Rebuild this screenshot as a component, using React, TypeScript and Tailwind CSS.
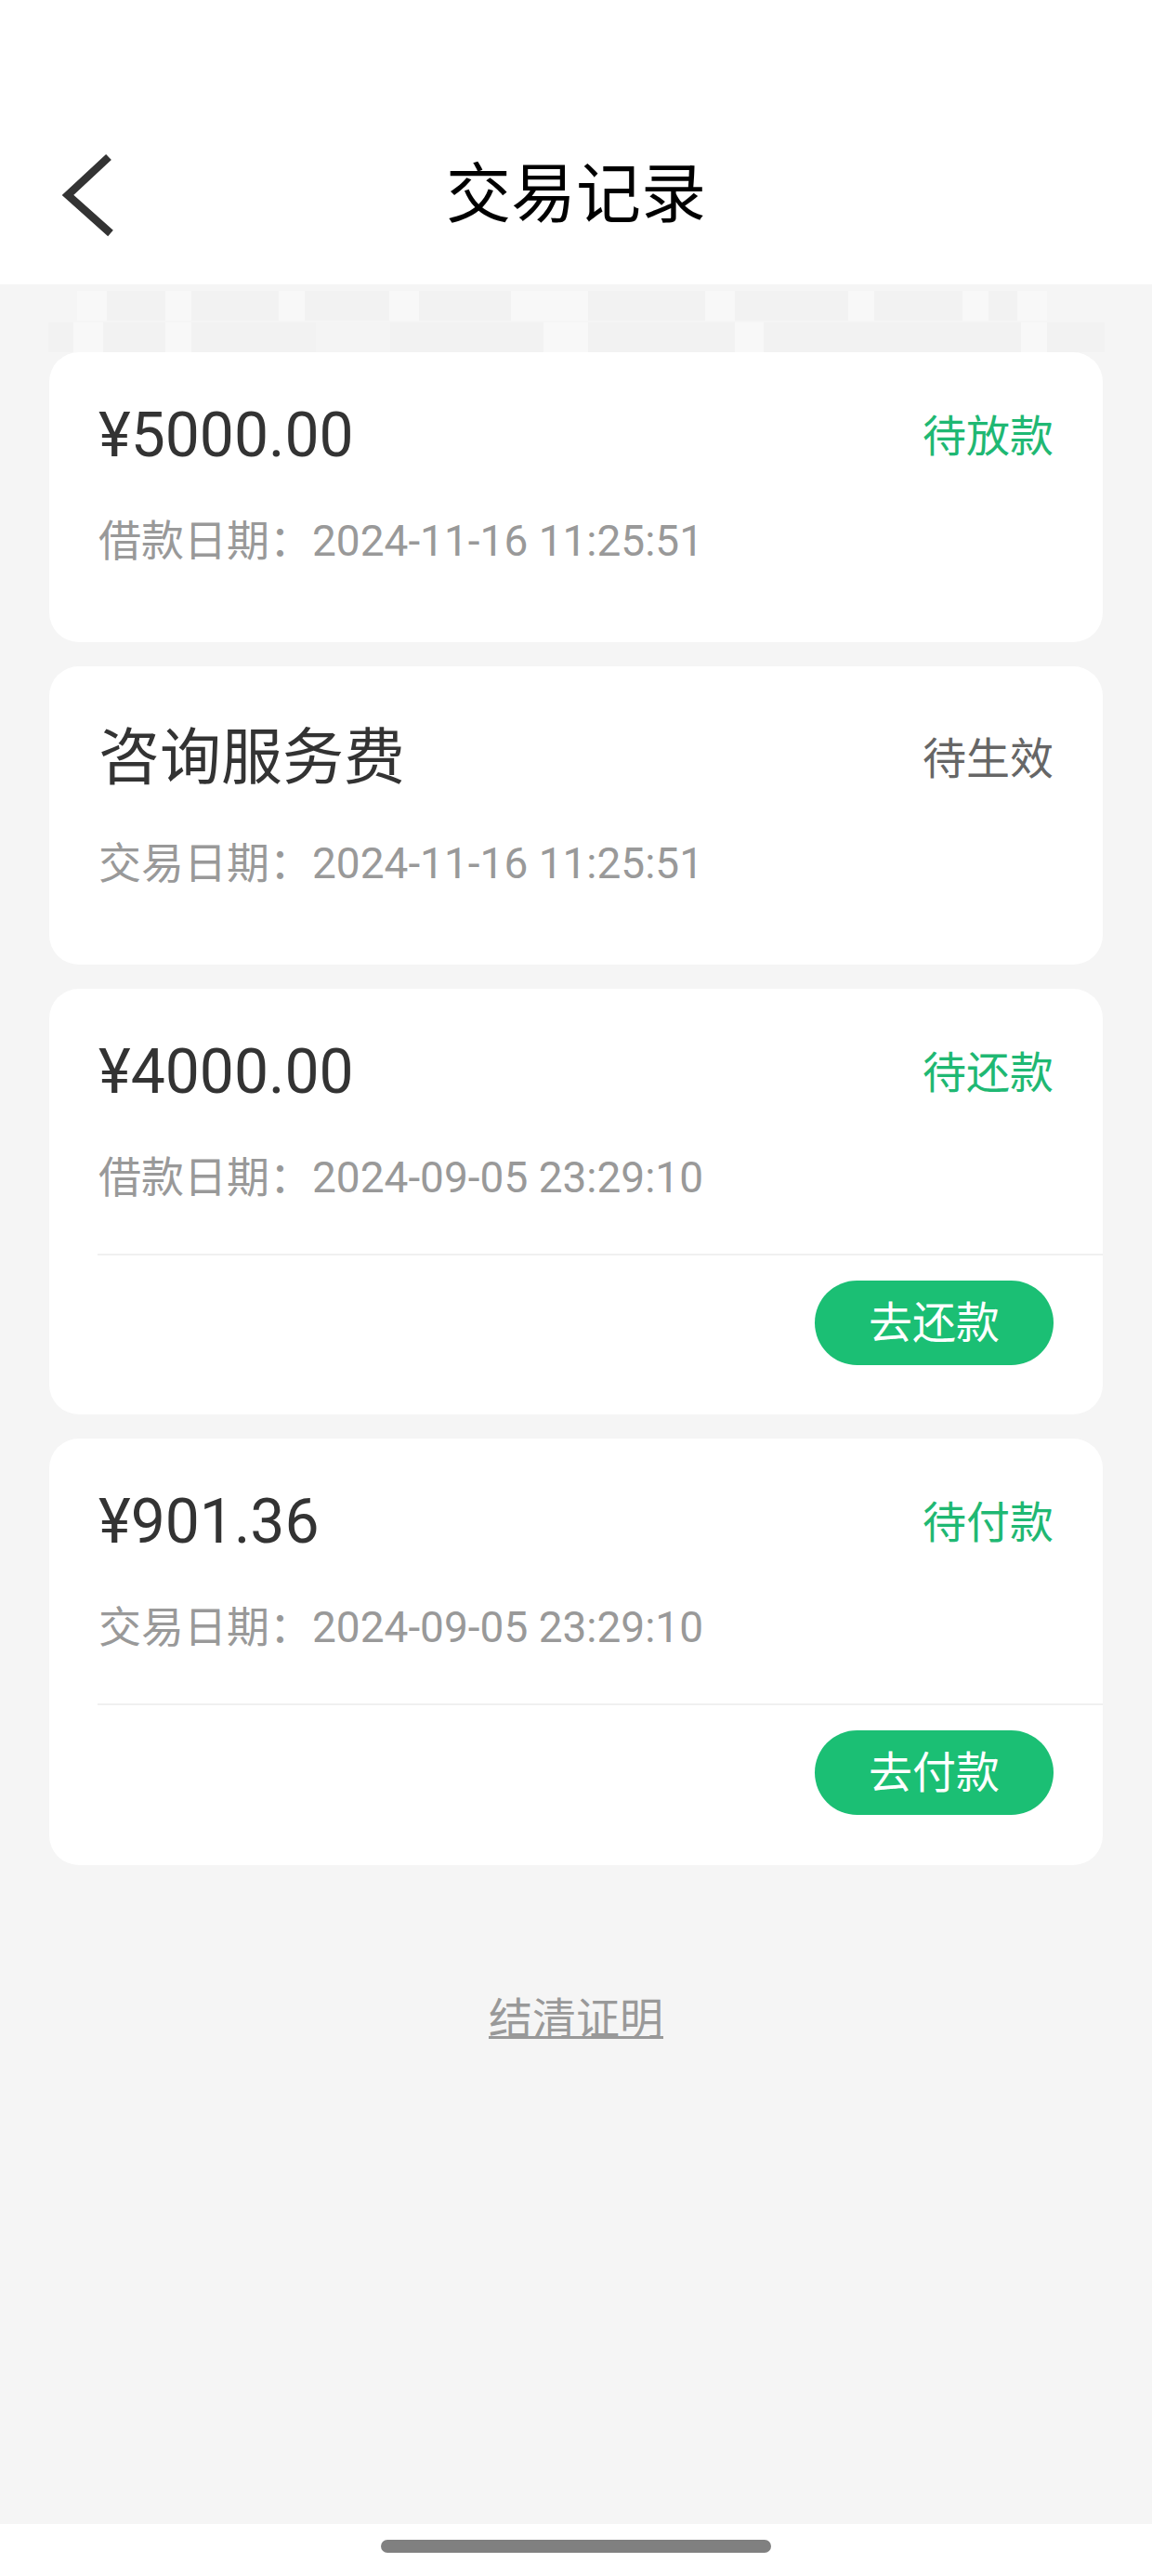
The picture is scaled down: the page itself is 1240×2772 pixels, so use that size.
import React from 'react';

const FONT = "font-['Roboto','Noto_Sans_CJK_SC',sans-serif]";

// faint blurred strip under the header
const stripTop = [
  'w-[83px]',
  'w-[32px] bg-[#f8f8f8]',
  'w-[63px] bg-[#f2f2f2]',
  'w-[28px] bg-[#f8f8f8]',
  'w-[94px] bg-[#f2f2f2]',
  'w-[28px] bg-[#f8f8f8]',
  'w-[91px] bg-[#f2f2f2]',
  'w-[32px] bg-[#f8f8f8]',
  'w-[99px] bg-[#f2f2f2]',
  'w-[83px] bg-[#f8f8f8]',
  'w-[126px] bg-[#f2f2f2]',
  'w-[32px] bg-[#f8f8f8]',
  'w-[122px] bg-[#f2f2f2]',
  'w-[28px] bg-[#f8f8f8]',
  'w-[95px] bg-[#f2f2f2]',
  'w-[28px] bg-[#f8f8f8]',
  'w-[31px] bg-[#f2f2f2]',
  'w-[32px] bg-[#f8f8f8]',
];

const stripBottom = [
  'w-[52px]',
  'w-[27px] bg-[#f2f2f2]',
  'w-[32px] bg-[#f8f8f8]',
  'w-[67px] bg-[#f2f2f2]',
  'w-[28px] bg-[#f8f8f8]',
  'w-[134px] bg-[#f2f2f2]',
  'w-[80px] bg-[#f4f4f4]',
  'w-[165px] bg-[#f2f2f2]',
  'w-[48px] bg-[#f8f8f8]',
  'w-[158px] bg-[#f2f2f2]',
  'w-[31px] bg-[#f8f8f8]',
  'w-[277px] bg-[#f2f2f2]',
  'w-[28px] bg-[#f8f8f8]',
  'w-[62px] bg-[#f2f2f2]',
];

function BackIcon() {
  return (
    <svg width="60" height="92" viewBox="0 0 60 92" fill="none">
      <polyline
        points="51,5 7,46 53,87"
        stroke="#333333"
        strokeWidth="8.5"
        strokeLinejoin="miter"
      />
    </svg>
  );
}

function PayButton({ label }: { label: string }) {
  return (
    <button className="w-[257px] h-[91px] rounded-full bg-[#1bbf74] text-white text-[47px] leading-none">
      {label}
    </button>
  );
}

function App() {
  return (
    <div className={`${FONT} w-[1240px] h-[2772px] flex flex-col bg-[#f5f5f5]`}>
      {/* header */}
      <div className="h-[306px] bg-white pt-[164px]">
        <div className="grid grid-cols-3 h-[92px] items-center">
          <div className="pl-[66px] flex items-center">
            <BackIcon />
          </div>
          <h1 className="text-center text-[70px] leading-[92px] font-normal text-black">
            交易记录
          </h1>
          <div />
        </div>
      </div>

      <div className="flex-1 flex flex-col">
        <div className="pt-[7px]">
          <div className="flex h-[32px]">
            {stripTop.map((c, i) => (
              <div key={i} className={c} />
            ))}
          </div>
          <div className="flex h-[32px] mt-[2px]">
            {stripBottom.map((c, i) => (
              <div key={i} className={c} />
            ))}
          </div>
        </div>

        <div className="px-[53px] flex flex-col gap-[26px]">
          {/* card 1 */}
          <div className="bg-white rounded-[32px] h-[312px] pt-[52px] px-[53px]">
            <div className="flex items-center justify-between h-[76px]">
              <span className="text-[66px] text-[#333] leading-none">¥5000.00</span>
              <span className="text-[47px] text-[#1fb873] leading-none">待放款</span>
            </div>
            <div className="mt-[45px] text-[46px] leading-[60px] text-[#999]">
              借款日期：2024-11-16 11:25:51
            </div>
          </div>

          {/* card 2 */}
          <div className="bg-white rounded-[32px] h-[321px] pt-[52px] px-[53px]">
            <div className="flex items-center justify-between h-[94px]">
              <span className="text-[66px] text-[#333] leading-none">咨询服务费</span>
              <span className="text-[47px] text-[#666] leading-none">待生效</span>
            </div>
            <div className="mt-[36px] text-[46px] leading-[60px] text-[#999]">
              交易日期：2024-11-16 11:25:51
            </div>
          </div>

          {/* card 3 */}
          <div className="bg-white rounded-[32px] h-[458px] pt-[52px]">
            <div className="px-[53px]">
              <div className="flex items-center justify-between h-[76px]">
                <span className="text-[66px] text-[#333] leading-none">¥4000.00</span>
                <span className="text-[47px] text-[#1fb873] leading-none">待还款</span>
              </div>
              <div className="mt-[45px] text-[46px] leading-[60px] text-[#999]">
                借款日期：2024-09-05 23:29:10
              </div>
            </div>
            <div className="mt-[52px] ml-[52px] border-t-2 border-[#f0f0f0]" />
            <div className="flex justify-end pt-[27px] pr-[53px]">
              <PayButton label="去还款" />
            </div>
          </div>

          {/* card 4 */}
          <div className="bg-white rounded-[32px] h-[459px] pt-[52px]">
            <div className="px-[53px]">
              <div className="flex items-center justify-between h-[76px]">
                <span className="text-[66px] text-[#333] leading-none">¥901.36</span>
                <span className="text-[47px] text-[#1fb873] leading-none">待付款</span>
              </div>
              <div className="mt-[45px] text-[46px] leading-[60px] text-[#999]">
                交易日期：2024-09-05 23:29:10
              </div>
            </div>
            <div className="mt-[52px] ml-[52px] border-t-2 border-[#f0f0f0]" />
            <div className="flex justify-end pt-[27px] pr-[53px]">
              <PayButton label="去付款" />
            </div>
          </div>
        </div>

        <div className="mt-[136px] flex justify-center">
          <a className="text-[47px] leading-[60px] text-[#999] underline decoration-[3px] underline-offset-[2px]">
            结清证明
          </a>
        </div>
      </div>

      {/* home indicator */}
      <div className="h-[56px] bg-white flex justify-center pt-[17px]">
        <div className="w-[420px] h-[14px] rounded-full bg-[#808080]" />
      </div>
    </div>
  );
}

export default App;
